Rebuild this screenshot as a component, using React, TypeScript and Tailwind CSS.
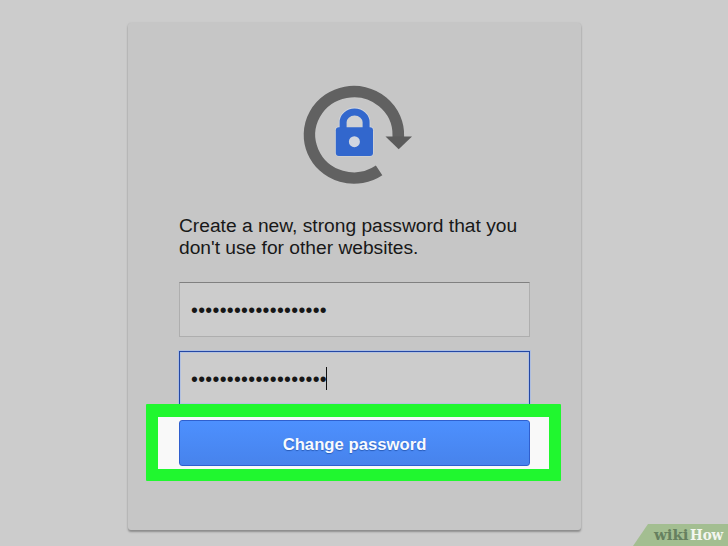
import React from "react";

const MASK = "•".repeat(19);

function LockIcon() {
  return (
    <svg className="ml-[171px] block h-[104px] w-[116px]" viewBox="299 83 116 104" fill="none">
      <path
        d="M398.3 137 V134.8 A44.4 43.2 0 1 0 379.1 169.4"
        stroke="#616161"
        strokeWidth="11.6"
      />
      <path d="M385.5 135.6 H412 L398.7 148.2 Z" fill="#5b5b5b" />
      <g transform="translate(0 -1)">
        <path
          d="M343.3 130 V122.3 A11.3 10.4 0 0 1 365.9 122.3 V130"
          stroke="#d3d7de"
          strokeWidth="9"
        />
        <rect x="335.2" y="126.4" width="38.4" height="30" rx="3.6" fill="#d3d7de" />
        <path d="M346.4 127.5 V122.4 A8.1 7.4 0 0 1 362.6 122.4 V127.5 Z" fill="#d0d1d3" />
        <path
          d="M343.1 130 V122.3 A11.5 10.2 0 0 1 366.1 122.3 V130"
          stroke="#3267cd"
          strokeWidth="7"
        />
        <rect x="335.8" y="127.2" width="37.2" height="28.9" rx="3" fill="#3267cd" />
        <circle cx="354.4" cy="141.7" r="5.5" fill="#d1d6e0" />
      </g>
    </svg>
  );
}

export default function App() {
  return (
    <main className="relative h-[546px] w-[728px] overflow-hidden bg-[#cccccc] pt-[23px] font-['Liberation_Sans',Arial,sans-serif]">
      <section className="ml-[128px] flex h-[507px] w-[453px] flex-col rounded-[3px] bg-[#c6c6c6] pt-[61px] shadow-[0_2px_2px_#8d8d8d,0_0_2px_#b8b8b8]">
        <LockIcon />
        <p className="mt-[27px] ml-[51px] text-[19.2px] leading-[22px] whitespace-nowrap text-[#181818]">
          Create a new, strong password that you
          <br />
          don't use for other websites.
        </p>
        <div className="mt-[23px] ml-[51px] flex h-[55px] w-[351px] shrink-0 items-center border border-t-[#808080] border-x-[#aeaeae] border-b-[#aeaeae] bg-[#cccccc] pl-[11px] text-[19.6px] leading-[24px] tracking-[0.3px] text-[#161616]">
          <span>{MASK}</span>
        </div>
        <div className="mt-[14px] ml-[51px] flex h-[53px] w-[351px] shrink-0 items-start border-x border-t border-[#2448a4] bg-[#cccccc] pt-[15px] pl-[11px] text-[19.6px] leading-[24px] tracking-[0.3px] text-[#161616] shadow-[0_0_0_1px_#aebee0,inset_0_0_0_1px_#b4c2e0]">
          <span>{MASK}</span>
          <span className="-ml-px h-[23px] w-px bg-[#111111]" />
        </div>
        <div className="relative ml-[18px] flex h-[77px] w-[415px] shrink-0 rounded-[1px] border-x-[12px] border-t-[13px] border-b-[12px] border-[#20f72f] bg-[#f9f9f9] pt-[3px] pl-[21px]">
          <button className="h-[46px] w-[351px] rounded-[3px] border border-[#2f5fce] bg-linear-to-b from-[#4d90fe] to-[#4783ec] pt-[4px] text-[16.7px] leading-[20px] font-bold text-[#f7faff] [text-shadow:0_1px_1px_#285bb8]">
            Change password
          </button>
        </div>
      </section>
      <div className="absolute right-0 bottom-0 flex h-[22px] w-[95px] items-center bg-[#a3be91] pt-px pl-[21px] font-['DejaVu_Serif',serif] text-[15px] leading-none font-bold tracking-[-0.1px] [clip-path:polygon(15px_0,100%_0,100%_100%,0_100%)]">
        <span className="w-[36px] text-[#66805f]">wiki</span>
        <span className="origin-left scale-x-90 text-[#f3f6ef]">How</span>
      </div>
    </main>
  );
}
